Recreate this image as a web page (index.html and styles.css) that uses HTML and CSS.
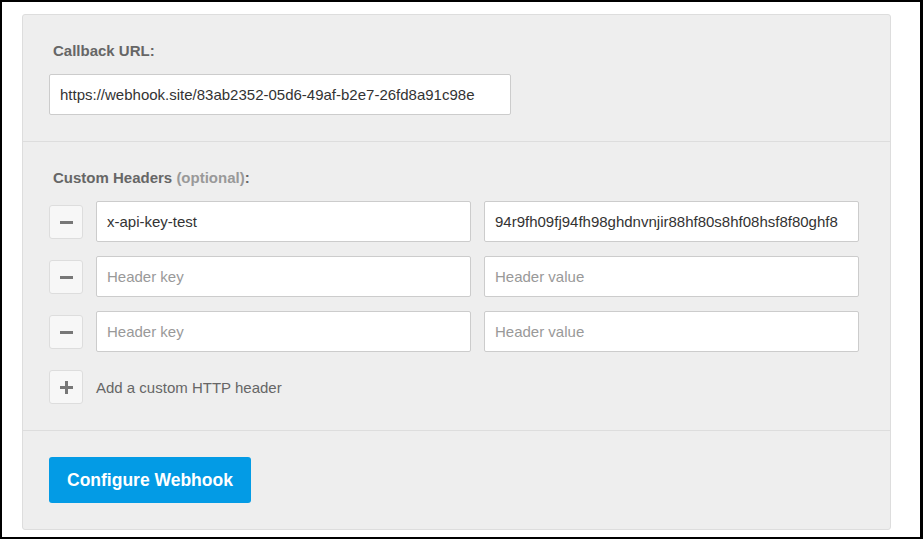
FILE: index.html
```html
<!DOCTYPE html>
<html lang="en">
<head>
    <meta charset="UTF-8">
    <title>Configure Webhook</title>
    <link rel="stylesheet" href="styles.css">
</head>
<body>
    <div class="panel">
        <div class="section">
            <label class="field-label">Callback URL:</label>
            <input class="text-input url-input" type="text" value="https://webhook.site/83ab2352-05d6-49af-b2e7-26fd8a91c98e">
        </div>

        <div class="section">
            <label class="field-label">Custom Headers <span class="optional">(optional)</span>:</label>
            <div class="header-row">
                <button class="icon-btn"><span class="minus"></span></button>
                <input class="text-input" type="text" value="x-api-key-test" placeholder="Header key">
                <input class="text-input" type="text" value="94r9fh09fj94fh98ghdnvnjir88hf80s8hf08hsf8f80ghf8" placeholder="Header value">
            </div>
            <div class="header-row">
                <button class="icon-btn"><span class="minus"></span></button>
                <input class="text-input" type="text" placeholder="Header key">
                <input class="text-input" type="text" placeholder="Header value">
            </div>
            <div class="header-row">
                <button class="icon-btn"><span class="minus"></span></button>
                <input class="text-input" type="text" placeholder="Header key">
                <input class="text-input" type="text" placeholder="Header value">
            </div>
            <div class="add-row">
                <button class="icon-btn"><span class="plus"></span></button>
                <span class="add-text">Add a custom HTTP header</span>
            </div>
        </div>

        <div class="section">
            <button class="primary-btn">Configure Webhook</button>
        </div>
    </div>
</body>
</html>
```

FILE: styles.css
```css
* {
    margin: 0;
    padding: 0;
    box-sizing: border-box;
}

html {
    background: #000;
}

body {
    width: 923px;
    height: 539px;
    border: 2px solid #000;
    border-right-width: 3px;
    background: #fff;
    font-family: "Liberation Sans", Arial, sans-serif;
    color: #333;
    padding: 12px 0 0 20px;
}

.panel {
    width: 869px;
    background: #eee;
    border: 1px solid #ddd;
    border-radius: 3px;
}

.section {
    padding: 26px 26px;
}

.section + .section {
    border-top: 1px solid #ddd;
}

.field-label {
    display: block;
    height: 20px;
    line-height: 20px;
    margin-bottom: 13px;
    padding-left: 4px;
    font-size: 15px;
    font-weight: bold;
    color: #666;
}

.optional {
    color: #999;
}

.text-input {
    display: block;
    height: 41px;
    padding: 0 10px;
    background: #fff;
    border: 1px solid #ccc;
    border-radius: 2px;
    font-family: inherit;
    font-size: 15px;
    color: #333;
    outline: none;
}

.text-input::placeholder {
    color: #999;
}

.url-input {
    width: 462px;
}

.header-row {
    display: grid;
    grid-template-columns: 34px 375px 375px;
    column-gap: 13px;
    align-items: center;
    margin-bottom: 14px;
}

.header-row .text-input {
    width: 100%;
}

.icon-btn {
    width: 34px;
    height: 34px;
    background: #f7f7f7;
    border: 1px solid #ddd;
    border-radius: 3px;
    position: relative;
    cursor: pointer;
}

.minus,
.plus::before,
.plus::after {
    position: absolute;
    left: 10px;
    top: 15px;
    width: 13px;
    height: 3px;
    background: #777;
}

.plus::before,
.plus::after {
    content: "";
}

.plus::after {
    transform: rotate(90deg);
}

.add-row {
    display: flex;
    align-items: center;
    gap: 13px;
    margin-top: 18px;
}

.add-text {
    font-size: 15px;
    color: #666;
}

.primary-btn {
    display: block;
    height: 46px;
    padding: 0 18px;
    background: #039be5;
    color: #fff;
    border: none;
    border-radius: 3px;
    font-family: inherit;
    font-size: 17.5px;
    font-weight: bold;
    cursor: pointer;
}
```
